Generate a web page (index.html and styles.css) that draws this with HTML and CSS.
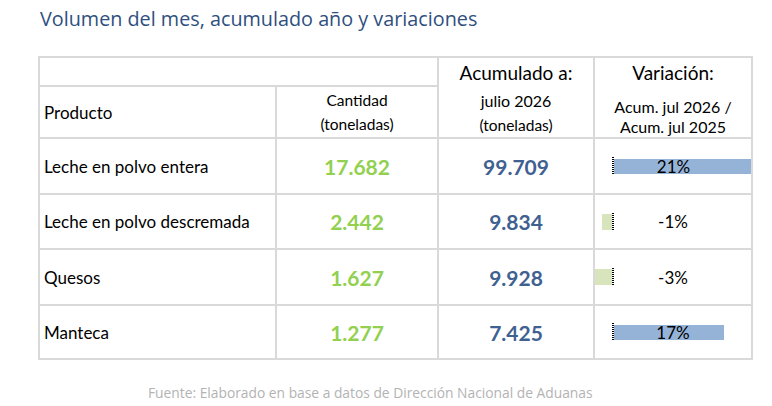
FILE: index.html
```html
<!DOCTYPE html>
<html lang="es">
<head>
<meta charset="utf-8">
<title>Volumen del mes</title>
<link rel="stylesheet" href="styles.css">
</head>
<body>
<div class="page">
  <h1 class="title">Volumen del mes, acumulado año y variaciones</h1>
  <div class="table">
    <div class="cell head-blank"></div>
    <div class="cell head-acum">
      <div class="h-main">Acumulado a:</div>
      <div class="h-sub1">julio 2026</div>
      <div class="h-sub2">(toneladas)</div>
    </div>
    <div class="cell head-var">
      <div class="h-main">Variación:</div>
      <div class="h-var1">Acum. jul 2026 /</div>
      <div class="h-var2">Acum. jul 2025</div>
    </div>
    <div class="cell head-prod">Producto</div>
    <div class="cell head-cant">
      <div class="h-sub1">Cantidad</div>
      <div class="h-sub2">(toneladas)</div>
    </div>

    <div class="cell prod">Leche en polvo entera</div>
    <div class="cell num green">17.682</div>
    <div class="cell num blue">99.709</div>
    <div class="cell var">
      <div class="bars"><div class="neg-area"></div><div class="axis"></div><div class="bar pos" style="width:139px"></div></div>
      <div class="pct">21%</div>
    </div>

    <div class="cell prod">Leche en polvo descremada</div>
    <div class="cell num green">2.442</div>
    <div class="cell num blue">9.834</div>
    <div class="cell var">
      <div class="bars"><div class="neg-area"><div class="bar neg" style="width:10px"></div></div><div class="axis"></div></div>
      <div class="pct">-1%</div>
    </div>

    <div class="cell prod">Quesos</div>
    <div class="cell num green">1.627</div>
    <div class="cell num blue">9.928</div>
    <div class="cell var">
      <div class="bars"><div class="neg-area"><div class="bar neg" style="width:17px"></div></div><div class="axis"></div></div>
      <div class="pct">-3%</div>
    </div>

    <div class="cell prod">Manteca</div>
    <div class="cell num green">1.277</div>
    <div class="cell num blue">7.425</div>
    <div class="cell var">
      <div class="bars"><div class="neg-area"></div><div class="axis"></div><div class="bar pos" style="width:111px"></div></div>
      <div class="pct">17%</div>
    </div>
  </div>
  <p class="source">Fuente: Elaborado en base a datos de Dirección Nacional de Aduanas</p>
</div>
</body>
</html>
```

FILE: styles.css
```css
html, body {
  margin: 0;
  padding: 0;
  background: #ffffff;
}

.page {
  width: 772px;
  height: 406px;
  overflow: hidden;
  font-family: Lato, "Noto Sans", sans-serif;
  color: #000;
}

.title {
  margin: 0;
  padding: 7px 0 0 40px;
  height: 56px;
  box-sizing: border-box;
  font-family: "Open Sans", Lato, sans-serif;
  font-weight: 400;
  font-size: 19.8px;
  line-height: 24px;
  color: #2f4f7f;
}

.table {
  margin-left: 38px;
  width: 715px;
  box-sizing: border-box;
  display: grid;
  grid-template-columns: 235px 160px 154px 156px;
  grid-template-rows: 27px 50px 54px 53px 54px 52px;
  gap: 2px;
  padding: 2px;
  background: #d9d9d9;
}

.cell {
  background: #ffffff;
  overflow: hidden;
}

.head-blank { grid-column: 1 / 3; grid-row: 1; }
.head-acum { grid-column: 3; grid-row: 1 / 3; text-align: center; }
.head-var { grid-column: 4; grid-row: 1 / 3; text-align: center; }
.head-prod { grid-column: 1; grid-row: 2; }
.head-cant { grid-column: 2; grid-row: 2; text-align: center; }

.h-main {
  font-size: 19px;
  line-height: 30px;
}

.head-acum .h-sub1 { font-size: 16px; line-height: 26px; }
.head-acum .h-sub2 { font-size: 15.5px; line-height: 22px; }

.head-cant .h-sub1 { font-size: 15.5px; line-height: 26px; }
.head-cant .h-sub2 { font-size: 15.5px; line-height: 22px; }

.h-var1 { font-size: 16px; line-height: 20px; margin-top: 9px; }
.h-var2 { font-size: 16px; line-height: 20px; }

.head-prod,
.prod {
  display: flex;
  align-items: center;
  padding-left: 4px;
  font-size: 17px;
}

.num {
  display: flex;
  align-items: center;
  justify-content: center;
  font-size: 21px;
  font-weight: 700;
}

.green { color: #92d050; }
.blue { color: #3f6191; }

.var {
  display: grid;
}

.bars,
.pct {
  grid-area: 1 / 1;
}

.bars {
  display: flex;
  align-items: center;
}

.neg-area {
  width: 17px;
  display: flex;
  justify-content: flex-end;
}

.bar {
  height: 15px;
}

.bar.pos { background: #95b3d7; }
.bar.neg { background: #d8e4bc; height: 16px; }

.axis {
  width: 2px;
  height: 18px;
  margin-right: -1px;
  background: repeating-linear-gradient(to bottom, #000 0 1px, #fff 1px 2px);
  position: relative;
  z-index: 1;
}

.pct {
  display: flex;
  align-items: center;
  justify-content: center;
  font-size: 17px;
  position: relative;
  z-index: 2;
}

.source {
  margin: 23px 0 0 148px;
  font-family: "Open Sans", Lato, sans-serif;
  font-size: 13.8px;
  line-height: 20px;
  color: #b3b3b3;
}
```
